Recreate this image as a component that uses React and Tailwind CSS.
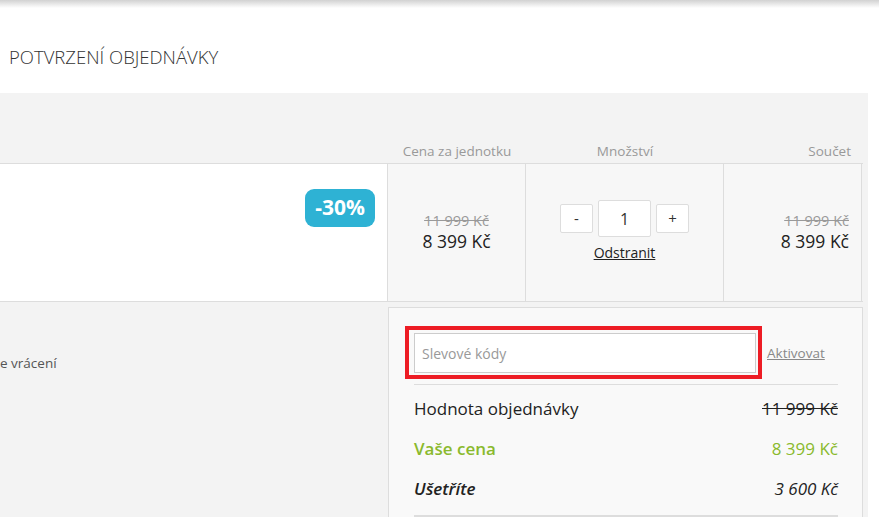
const font = { fontFamily: '"Open Sans", "Liberation Sans", sans-serif' };

const PriceStack = ({ old, now, align = "items-end" }) => (
  <div className={`flex flex-col ${align === "center" ? "items-center" : "items-end"}`}>
    <span className="text-[14.5px] leading-[18px] text-[#999] line-through">{old}</span>
    <span className="text-[17.5px] leading-[22px] text-[#222]">{now}</span>
  </div>
);

const QtyButton = ({ children }) => (
  <button
    type="button"
    className="w-[33px] h-[29px] border border-[#ddd] bg-white rounded-[2px] text-[15px] text-[#333] flex items-center justify-center"
  >
    {children}
  </button>
);

export default function App() {
  return (
    <div className="w-[879px] h-[517px] overflow-hidden bg-white" style={font}>
      <div className="h-[8px] bg-gradient-to-b from-[#d2d2d2] to-white" />

      <div className="h-[85px] flex items-center pl-[9px] pt-[13px]">
        <h1 className="text-[18.5px] font-light text-[#333]">
          POTVRZENÍ OBJEDNÁVKY
        </h1>
      </div>

      <div className="w-[868px] bg-[#f3f3f3] pb-8">
        {/* column headers */}
        <div className="h-[70px] grid grid-cols-[388px_138px_198px_138px] items-end pb-[2px] text-[13.5px] text-[#999]">
          <div />
          <div className="text-center">Cena za jednotku</div>
          <div className="text-center">Množství</div>
          <div className="text-right pr-[11px]">Součet</div>
        </div>

        {/* item row */}
        <div className="grid grid-cols-[388px_138px_198px_138px] h-[139px] border-t border-b border-[#ddd] w-[863px]">
          <div className="bg-white border-r border-[#ddd] flex items-start justify-end pt-[25px] pr-[12px]">
            <span className="bg-[#2eb2d4] text-white font-bold text-[21px] rounded-[9px] px-[10px] h-[38px] flex items-center">
              -30%
            </span>
          </div>
          <div className="bg-[#f7f7f7] border-r border-[#ddd] flex items-center justify-center pb-[2px]">
            <PriceStack old="11 999 Kč" now="8 399 Kč" align="center" />
          </div>
          <div className="bg-[#f7f7f7] border-r border-[#ddd] flex flex-col items-center justify-center pb-[2px]">
            <div className="flex items-center gap-[5px]">
              <QtyButton>-</QtyButton>
              <input
                readOnly
                value="1"
                className="w-[53px] h-[37px] border border-[#ddd] bg-white rounded-[2px] text-center text-[16px] text-[#333] outline-none"
              />
              <QtyButton>+</QtyButton>
            </div>
            <a className="mt-[5px] text-[14px] text-[#222] underline">Odstranit</a>
          </div>
          <div className="bg-[#f7f7f7] border-r border-[#ddd] flex items-center justify-end pr-[12px] pb-[2px]">
            <PriceStack old="11 999 Kč" now="8 399 Kč" />
          </div>
        </div>

        {/* summary */}
        <div className="flex mt-[5px]">
          <div className="w-[388px] pt-[46px] text-[13.5px] text-[#555]">e vrácení</div>
          <div className="w-[475px] bg-[#f9f9f9] border border-[#ddd] pl-[25px] pr-[24px] pt-[25px]">
            <div className="flex items-center">
              <div className="relative">
                <input
                  placeholder="Slevové kódy"
                  className="w-[342px] h-[40px] border border-[#ccc] bg-white px-[7px] text-[14px] text-[#333] placeholder:text-[#999] outline-none"
                />
                <div className="absolute -left-[9px] -top-[7px] w-[357px] h-[53px] border-4 border-[#ed1c24] pointer-events-none" />
              </div>
              <a className="ml-[11px] text-[13.5px] text-[#888] underline">Aktivovat</a>
            </div>
            <div className="mt-[11px] border-t border-[#ddd]" />
            <div className="flex justify-between items-center h-[40px] mt-[4px] text-[17px] text-[#222]">
              <span>Hodnota objednávky</span>
              <span className="line-through">11 999 Kč</span>
            </div>
            <div className="flex justify-between items-center h-[40px] text-[17px] text-[#8ab92d]">
              <span className="font-semibold">Vaše cena</span>
              <span>8 399 Kč</span>
            </div>
            <div className="flex justify-between items-center h-[40px] text-[17px] text-[#222] italic">
              <span className="font-semibold">Ušetříte</span>
              <span>3 600 Kč</span>
            </div>
            <div className="mt-[6px] border-t-[3px] border-[#ddd]" />
          </div>
        </div>
      </div>
    </div>
  );
}
